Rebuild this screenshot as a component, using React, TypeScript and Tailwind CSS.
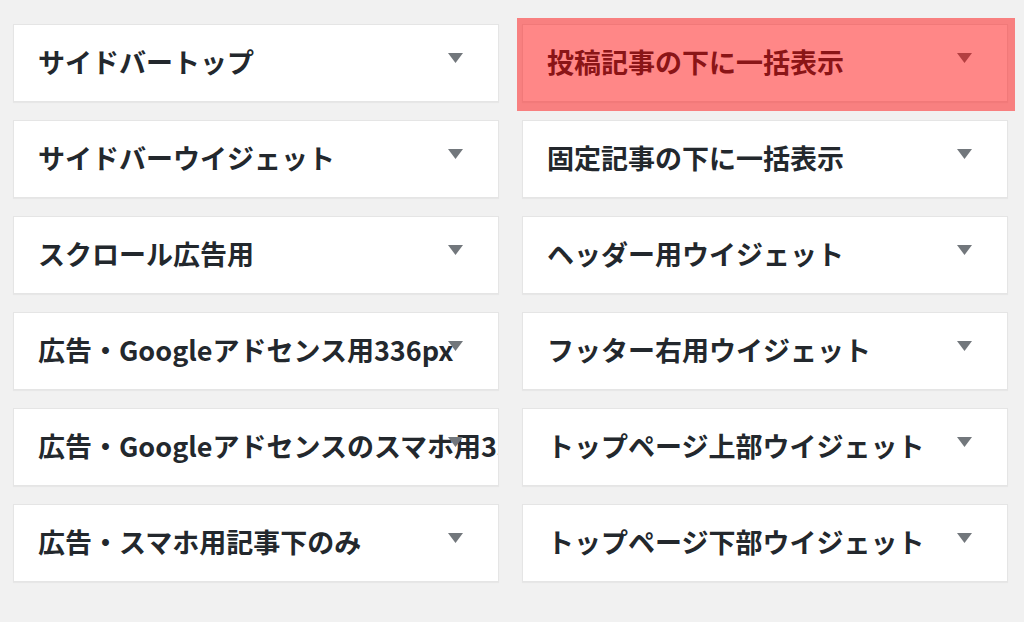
import React from "react";

const left = [
  "サイドバートップ",
  "サイドバーウイジェット",
  "スクロール広告用",
  "広告・Googleアドセンス用336px",
  "広告・Googleアドセンスのスマホ用336px",
  "広告・スマホ用記事下のみ",
];
const right = [
  "投稿記事の下に一括表示",
  "固定記事の下に一括表示",
  "ヘッダー用ウイジェット",
  "フッター右用ウイジェット",
  "トップページ上部ウイジェット",
  "トップページ下部ウイジェット",
];

function Widget({ title, highlight }: { title: string; highlight?: boolean }) {
  return (
    <div className="relative h-[78px] bg-white border border-[#e5e5e5] shadow-[0_1px_1px_rgba(0,0,0,0.04)] flex items-center">
      <div className="pl-[24px] pr-[12px] pb-[3px] w-full overflow-hidden whitespace-nowrap text-[27px] font-bold text-[#23282d] leading-[1.4]">
        {title}
      </div>
      <svg
        className="absolute right-[35px] top-[28px]"
        width="15"
        height="10"
        viewBox="0 0 15 10"
      >
        <polygon points="0,0 15,0 7.5,10" fill="#72777c" />
      </svg>
      {highlight && (
        <div className="absolute -top-[7px] -left-[6px] -right-[8px] -bottom-[10px] bg-[rgba(255,0,0,0.47)]" />
      )}
    </div>
  );
}

export default function App() {
  return (
    <div
      className="w-[1024px] h-[622px] bg-[#f1f1f1] pl-[13px] pr-[16px] pt-[24px]"
      style={{ fontFamily: '"Noto Sans CJK JP", "Noto Sans", sans-serif' }}
    >
      <div className="grid grid-cols-2 gap-x-[23px]">
        <div className="flex flex-col gap-[18px]">
          {left.map((t) => (
            <Widget key={t} title={t} />
          ))}
        </div>
        <div className="flex flex-col gap-[18px]">
          {right.map((t, i) => (
            <Widget key={t} title={t} highlight={i === 0} />
          ))}
        </div>
      </div>
    </div>
  );
}
